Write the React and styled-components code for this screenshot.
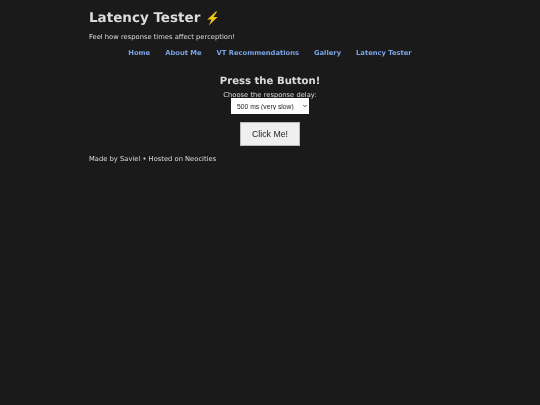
import styled, { createGlobalStyle } from 'styled-components';
import { ChevronDown } from 'lucide-react';

const GlobalStyle = createGlobalStyle`
	html, body {
		margin: 0;
		background: #1a1a1a;
		color: #dcdcdc;
		font-family: "DejaVu Sans", Verdana, sans-serif;
		text-rendering: geometricPrecision;
	}
`;

const Page = styled.div`
	width: 362px;
	margin: 0 auto;
	padding-top: 9px;
	will-change: transform;
`;

const Title = styled.h1`
	display: flex;
	align-items: center;
	gap: 5px;
	margin: 0;
	font-size: 13.5px;
	line-height: 18px;
	font-weight: 700;
`;

const Bolt = styled.svg`
	width: 15px;
	height: 15px;
`;

const Tagline = styled.p`
	margin: 6px 0 0;
	font-size: 6.75px;
	line-height: 9px;
`;

const Nav = styled.nav`
	display: flex;
	justify-content: center;
	gap: 15px;
	margin-top: 7px;
`;

const NavLink = styled.a`
	color: #7aa2e3;
	font-size: 6.75px;
	line-height: 9px;
	font-weight: 700;
	text-decoration: none;
`;

const Main = styled.main`
	display: flex;
	flex-direction: column;
	align-items: center;
	margin-top: 17px;
`;

const Heading = styled.h2`
	margin: 0;
	font-size: 10.125px;
	line-height: 13px;
	font-weight: 700;
`;

const DelayLabel = styled.label`
	margin-top: 3px;
	font-size: 6.75px;
	line-height: 8px;
`;

const SelectWrap = styled.div`
	position: relative;
	width: 78px;
	height: 16px;
	margin-top: -1px;
`;

const DelaySelect = styled.select`
	appearance: none;
	display: block;
	width: 100%;
	height: 100%;
	padding: 0 0 0 6px;
	border: 0;
	background: #fff;
	color: #222;
	font-family: "Liberation Sans", Arial, sans-serif;
	font-size: 6.75px;
`;

const SelectArrow = styled(ChevronDown)`
	position: absolute;
	top: 5px;
	right: 1px;
	width: 6px;
	height: 6px;
	color: #333;
	pointer-events: none;
`;

const ClickButton = styled.button`
	width: 60px;
	height: 24px;
	margin-top: 8px;
	padding: 0;
	border: 1px solid #bbb;
	background: #efefef;
	color: #222;
	font-family: "Liberation Sans", Arial, sans-serif;
	font-size: 8.75px;
`;

const Footer = styled.footer`
	margin-top: 9px;
	font-size: 6.75px;
	line-height: 9px;
`;

const links = ['Home', 'About Me', 'VT Recommendations', 'Gallery', 'Latency Tester'];

export default function App() {
	return (
		<>
			<GlobalStyle />
			<Page>
				<Title>
					Latency Tester
					<Bolt viewBox="0 0 16 16">
						<path d="M11.5 0.5 L2.5 9 L7 9 L4 15.5 L13.5 6.5 L9 6.5 L13 0.5 Z" fill="#f5c518" />
					</Bolt>
				</Title>
				<Tagline>Feel how response times affect perception!</Tagline>
				<Nav>
					{links.map((link) => (
						<NavLink href="#" key={link}>{link}</NavLink>
					))}
				</Nav>
				<Main>
					<Heading>Press the Button!</Heading>
					<DelayLabel htmlFor="delay">Choose the response delay:</DelayLabel>
					<SelectWrap>
						<DelaySelect id="delay" defaultValue="500">
							<option value="500">500 ms (very slow)</option>
						</DelaySelect>
						<SelectArrow strokeWidth={3.5} />
					</SelectWrap>
					<ClickButton>Click Me!</ClickButton>
				</Main>
				<Footer>Made by Saviel • Hosted on Neocities</Footer>
			</Page>
		</>
	);
}
